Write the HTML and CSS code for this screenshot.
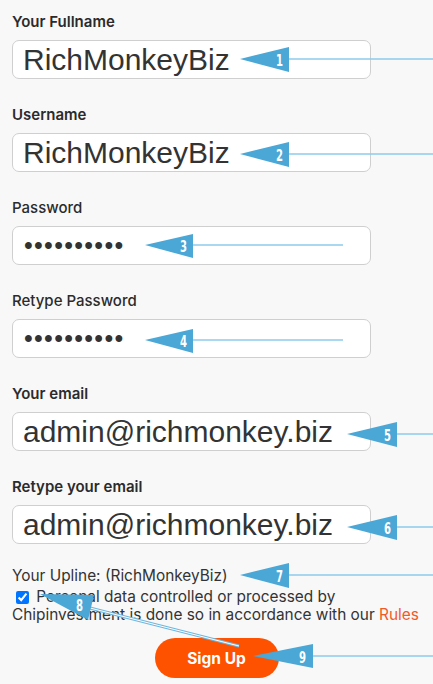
FILE: index.html
```html
<!DOCTYPE html>
<html lang="en">
<head>
  <meta charset="UTF-8">
  <meta name="viewport" content="width=device-width, initial-scale=1.0">
  <title>Sign Up</title>
  <link rel="stylesheet" href="styles.css">
</head>
<body>
  <form id="signup">
    <div class="field">
      <label for="fullname">Your Fullname</label>
      <input id="fullname" type="text" value="RichMonkeyBiz">
    </div>
    <div class="field">
      <label for="username">Username</label>
      <input id="username" type="text" value="RichMonkeyBiz">
    </div>
    <div class="field">
      <label class="light" for="password">Password</label>
      <input id="password" class="pw" type="password" value="secret1234">
    </div>
    <div class="field">
      <label class="light" for="password2">Retype Password</label>
      <input id="password2" class="pw" type="password" value="secret1234">
    </div>
    <div class="field">
      <label for="email">Your email</label>
      <input id="email" type="text" value="admin@richmonkey.biz">
    </div>
    <div class="field last">
      <label for="email2">Retype your email</label>
      <input id="email2" type="text" value="admin@richmonkey.biz">
    </div>

    <div class="upline">Your Upline: (RichMonkeyBiz)</div>
    <p class="consent">
      <input type="checkbox" checked>
      Personal data controlled or processed by Chipinvestment is done so in accordance with our <a href="#">Rules</a>
    </p>

    <div class="actions">
      <button type="button">Sign Up</button>
    </div>
  </form>

  <!-- numbered annotation arrows drawn over the form -->
  <svg class="notes" width="433" height="684" viewBox="0 0 433 684">
    <g class="lines">
      <line x1="289" y1="59" x2="433" y2="59"/>
      <line x1="289" y1="154" x2="433" y2="154"/>
      <line x1="193" y1="245" x2="343" y2="245"/>
      <line x1="193" y1="340" x2="343" y2="340"/>
      <line x1="397" y1="434" x2="433" y2="434"/>
      <line x1="397" y1="527" x2="433" y2="527"/>
      <line x1="289" y1="575" x2="433" y2="575"/>
      <line x1="313" y1="656" x2="433" y2="656"/>
    </g>
    <line class="line8" x1="90" y1="608" x2="239" y2="646"/>
    <line class="line8-inner" x1="90" y1="608" x2="239" y2="646"/>
    <g class="heads">
      <polygon points="240,59 289,47 289,72"/>
      <polygon points="240,154 289,142 289,167"/>
      <polygon points="145,245 193,234 193,258"/>
      <polygon points="145,340 193,329 193,353"/>
      <polygon points="347,434 397,422 397,447"/>
      <polygon points="347,527 397,515 397,540"/>
      <polygon points="240,575 289,563 289,588"/>
      <polygon points="40,594 94,595 88,620"/>
      <polygon points="253,656 313,644 313,668"/>
    </g>
    <g class="nums">
      <text x="276" y="66" textLength="7" lengthAdjust="spacingAndGlyphs">1</text>
      <text x="276" y="161" textLength="7" lengthAdjust="spacingAndGlyphs">2</text>
      <text x="180" y="252" textLength="7" lengthAdjust="spacingAndGlyphs">3</text>
      <text x="180" y="347" textLength="7" lengthAdjust="spacingAndGlyphs">4</text>
      <text x="384" y="441" textLength="7" lengthAdjust="spacingAndGlyphs">5</text>
      <text x="384" y="534" textLength="7" lengthAdjust="spacingAndGlyphs">6</text>
      <text x="276" y="582" textLength="7" lengthAdjust="spacingAndGlyphs">7</text>
      <text x="76" y="611" textLength="7" lengthAdjust="spacingAndGlyphs">8</text>
      <text x="299" y="663" textLength="7" lengthAdjust="spacingAndGlyphs">9</text>
    </g>
  </svg>
</body>
</html>
```

FILE: styles.css
```css
body {
  margin: 0;
  padding: 12px 12px 0;
  background-color: #f8f8f8;
  font-family: Inter, "Noto Sans", sans-serif;
  color: #2b2b2b;
  position: relative;
  height: 684px;
  box-sizing: border-box;
  overflow: hidden;
}

.field {
  margin-bottom: 26px;
}

.field.last {
  margin-bottom: 24px;
}

.field label {
  display: block;
  font-size: 15px;
  font-weight: 600;
  line-height: 20px;
  margin-bottom: 8px;
}

.field label.light {
  font-weight: 500;
}

.field input {
  display: block;
  box-sizing: border-box;
  width: 359px;
  height: 39px;
  padding: 0 10px;
  border: 1px solid #cfcfcf;
  border-radius: 7px;
  background-color: #fff;
  font-family: "Liberation Sans", Arial, sans-serif;
  font-size: 30px;
  color: #333;
  outline: none;
}

.field input.pw {
  font-size: 25px;
  letter-spacing: 1.3px;
  padding-left: 11px;
}

.upline {
  font-size: 15.4px;
  line-height: 16px;
  color: #333;
}

.consent {
  margin: 4px 0 0;
  font-size: 15.4px;
  line-height: 16px;
  color: #333;
}

.consent input {
  margin: 3px 3px 3px 4px;
  width: 13px;
  height: 13px;
  vertical-align: -2px;
}

.consent a {
  color: #f05a28;
  text-decoration: none;
}

.actions {
  display: flex;
  justify-content: center;
  margin-top: 15px;
  margin-left: -12px;
  margin-right: -12px;
}

.actions button {
  width: 124px;
  height: 40px;
  border: none;
  border-radius: 20px;
  background-color: #ff5200;
  color: #fff;
  font-family: Inter, "Noto Sans", sans-serif;
  font-size: 15.5px;
  font-weight: 700;
  cursor: pointer;
}

.notes {
  position: absolute;
  top: 0;
  left: 0;
  pointer-events: none;
}

.notes .lines line {
  stroke: #8ccbeb;
  stroke-width: 1.5;
}

.notes .line8 {
  stroke: #6fb7df;
  stroke-width: 3;
}

.notes .line8-inner {
  stroke: #fff;
  stroke-width: 1;
}

.notes .heads polygon {
  fill: #4aa7d6;
}

.notes .nums text {
  fill: #fff;
  font-family: "DejaVu Sans Condensed", "DejaVu Sans", sans-serif;
  font-weight: 700;
  font-size: 16px;
}
```
